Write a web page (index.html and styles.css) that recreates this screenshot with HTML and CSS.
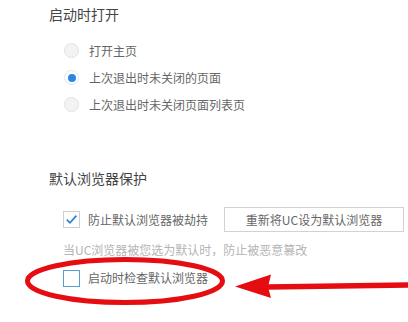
FILE: index.html
```html
<!DOCTYPE html>
<html lang="zh-CN">
<head>
<meta charset="utf-8">
<link rel="stylesheet" href="styles.css">
</head>
<body>
<div class="page">
  <section class="sec sec-open">
    <div class="title">启动时打开</div>
    <div class="options">
      <label class="row"><span class="radio"></span><span class="txt">打开主页</span></label>
      <label class="row"><span class="radio on"></span><span class="txt">上次退出时未关闭的页面</span></label>
      <label class="row"><span class="radio"></span><span class="txt">上次退出时未关闭页面列表页</span></label>
    </div>
  </section>
  <section class="sec sec-default">
    <div class="title">默认浏览器保护</div>
    <div class="row row-protect">
      <span class="check on"><svg width="15" height="15" viewBox="0 0 15 15"><path d="M2.8 7.6 L6 10.8 L12.4 3.6" fill="none" stroke="#2f7fd6" stroke-width="1.7"/></svg></span>
      <span class="txt">防止默认浏览器被劫持</span>
      <button class="btn">重新将UC设为默认浏览器</button>
    </div>
    <div class="hint">当UC浏览器被您选为默认时，防止被恶意篡改</div>
    <div class="row row-check">
      <span class="check blue"></span>
      <span class="txt">启动时检查默认浏览器</span>
    </div>
  </section>
  <svg class="marks" width="408" height="322" viewBox="0 0 408 322">
    <ellipse cx="125" cy="281" rx="97.5" ry="21.5" fill="none" stroke="#e50d12" stroke-width="5"/>
    <path d="M268 287 L410 285" stroke="#e50d12" stroke-width="5.5" fill="none"/>
    <path d="M235 286.5 L271 274.5 L268 287 L271 298 Z" fill="#e50d12"/>
  </svg>
</div>
</body>
</html>
```
FILE: styles.css
```css
html, body {
  margin: 0;
  padding: 0;
  background: #fff;
}
.page {
  position: relative;
  width: 408px;
  height: 322px;
  overflow: hidden;
  font-family: "Noto Sans CJK SC", "Microsoft YaHei", sans-serif;
  color: #666;
  box-sizing: border-box;
  padding-left: 49px;
}
.title {
  font-size: 14px;
  line-height: 20px;
  height: 20px;
  color: #444;
}
.sec-open {
  padding-top: 4px;
}
.options {
  margin-top: 13px;
  padding-left: 15px;
  display: flex;
  flex-direction: column;
}
.row {
  display: flex;
  align-items: center;
  font-size: 12px;
}
.options .row {
  height: 27px;
}
.radio {
  width: 13px;
  height: 13px;
  border-radius: 50%;
  border: 1px solid #e2e2e2;
  background: #f3f3f3;
  box-sizing: content-box;
  margin-right: 10px;
  position: relative;
}
.radio.on {
  background: #fff;
  border-color: #dfe6ee;
}
.radio.on::after {
  content: "";
  position: absolute;
  left: 3px;
  top: 3px;
  width: 8px;
  height: 8px;
  border-radius: 50%;
  background: #2b87e3;
}
.txt {
  line-height: 20px;
  color: #666;
}
.sec-default {
  margin-top: 50px;
}
.row-protect {
  margin-top: 19px;
  padding-left: 14px;
  height: 25px;
}
.check {
  width: 15px;
  height: 15px;
  border: 1px solid #cfcfcf;
  box-sizing: content-box;
  margin-right: 8px;
  display: flex;
  align-items: center;
  justify-content: center;
  background: #fff;
}
.check.blue {
  border-color: #5a9bd0;
}
.btn {
  margin-left: 16px;
  width: 180px;
  height: 25px;
  border: 1px solid #d2d2d2;
  background: #fff;
  font-family: inherit;
  font-size: 12px;
  color: #666;
  padding: 0;
}
.hint {
  margin-top: 8px;
  padding-left: 14px;
  font-size: 12px;
  line-height: 20px;
  color: #b4b4b4;
}
.row-check {
  margin-top: 8px;
  padding-left: 14px;
  height: 20px;
}
.marks {
  position: absolute;
  left: 0;
  top: 0;
  pointer-events: none;
}
```
